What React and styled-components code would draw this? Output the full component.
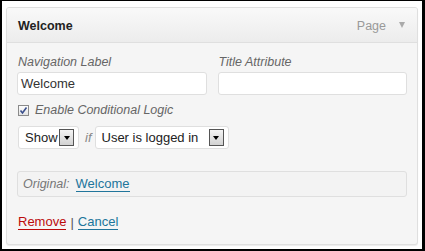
import React from 'react'
import styled, { createGlobalStyle } from 'styled-components'

const GlobalStyle = createGlobalStyle`
  html, body {
    margin: 0;
    padding: 0;
    background: #fff;
  }
  body {
    font-family: "Liberation Sans", Arial, sans-serif;
    font-size: 13px;
    color: #333;
  }
`

const Frame = styled.div`
  box-sizing: border-box;
  width: 425px;
  height: 251px;
  border: 2px solid #000;
  border-top-width: 1px;
  border-right-width: 3px;
  background: #fff;
  padding: 6px 0 0 4px;
`

const Panel = styled.div`
  box-sizing: border-box;
  width: 412px;
  height: 238px;
  border: 1px solid #dfdfdf;
  border-radius: 3px;
  background: #f5f5f5;
  box-shadow: 0 1px 1px rgba(0, 0, 0, 0.08);
  overflow: hidden;
`

const Header = styled.div`
  height: 34px;
  display: flex;
  align-items: center;
  padding: 0 12px 0 11px;
  border-bottom: 1px solid #dfdfdf;
  background: linear-gradient(to bottom, #f9f9f9, #ececec);
  font-size: 12.5px;
`

const Title = styled.span`
  flex: 1;
  font-weight: bold;
  color: #222;
  padding-top: 1px;
`

const Type = styled.span`
  color: #999;
  padding-top: 1px;
`

const Toggle = styled.span`
  margin-left: 13px;
  width: 0;
  height: 0;
  border-left: 3.5px solid transparent;
  border-right: 3.5px solid transparent;
  border-top: 6px solid #aaa;
`

const Body = styled.div`
  padding: 11px 10px 0 10px;
`

const Row = styled.div`
  display: flex;
  gap: 11px;
`

const Field = styled.div`
  display: flex;
  flex-direction: column;
  width: 190px;
`

const Label = styled.label`
  font-style: italic;
  font-size: 12.5px;
  color: #666;
  line-height: 17px;
  padding-left: 1px;
`

const Input = styled.div`
  box-sizing: border-box;
  height: 23px;
  margin-top: 1px;
  border: 1px solid #dfdfdf;
  border-radius: 3px;
  background: #fff;
  padding: 0 3px;
  line-height: 21px;
  color: #333;
`

const CheckRow = styled.div`
  display: flex;
  align-items: center;
  gap: 6px;
  margin-top: 8px;
  padding-left: 1px;
  font-style: italic;
  font-size: 12.5px;
  color: #666;
`

const Box = styled.span`
  box-sizing: border-box;
  width: 11px;
  height: 11px;
  border: 1px solid #8a8a8a;
  background: linear-gradient(to bottom, #fdfdfd, #e4e4e4);
  display: flex;
  align-items: center;
  justify-content: center;
`

const LogicRow = styled.div`
  display: flex;
  align-items: center;
  margin-top: 9px;
  padding-left: 1px;
`

const Select = styled.div`
  box-sizing: border-box;
  width: ${p => p.$w}px;
  height: 23px;
  border: 1px solid #dfdfdf;
  border-radius: 3px;
  background: #fff;
  display: flex;
  align-items: center;
  justify-content: space-between;
  padding: 0 4px 0 6px;
  color: #222;
`

const Arrow = styled.span`
  box-sizing: border-box;
  width: 15px;
  height: 17px;
  border: 1px solid #555;
  background: linear-gradient(to bottom, #f4f4f4, #d2d2d2);
  display: flex;
  align-items: center;
  justify-content: center;
  &::after {
    content: "";
    width: 0;
    height: 0;
    border-left: 3.5px solid transparent;
    border-right: 3.5px solid transparent;
    border-top: 4px solid #000;
  }
`

const If = styled.span`
  font-style: italic;
  color: #888;
  margin: 0 3px 0 6px;
`

const Original = styled.div`
  box-sizing: border-box;
  height: 26px;
  margin-top: 22px;
  width: 390px;
  border: 1px solid #dfdfdf;
  border-radius: 3px;
  background: #f3f3f3;
  display: flex;
  align-items: center;
  padding: 0 5px;
  color: #777;
  font-style: italic;
  font-size: 12.5px;
`

const Link = styled.a`
  color: ${p => p.$red ? '#bc0b0b' : '#21759b'};
  font-style: normal;
  font-size: 13px;
  text-decoration: none;
  border-bottom: 1px solid ${p => p.$red ? '#bc0b0b' : '#21759b'};
  line-height: 14px;
`

const Actions = styled.div`
  margin-top: 18px;
  padding-left: 1px;
  display: flex;
  align-items: flex-end;
  color: #555;
`

const Sep = styled.span`
  margin: 0 4px;
`

export default function App() {
  return (
    <>
      <GlobalStyle />
      <Frame>
        <Panel>
          <Header>
            <Title>Welcome</Title>
            <Type>Page</Type>
            <Toggle />
          </Header>
          <Body>
            <Row>
              <Field>
                <Label>Navigation Label</Label>
                <Input>Welcome</Input>
              </Field>
              <Field>
                <Label>Title Attribute</Label>
                <Input />
              </Field>
            </Row>
            <CheckRow>
              <Box>
                <svg width="9" height="9" viewBox="0 0 9 9">
                  <path d="M1.5 4.5 L3.5 7 L7.5 1.5" fill="none" stroke="#3a4f8c" strokeWidth="1.6" />
                </svg>
              </Box>
              Enable Conditional Logic
            </CheckRow>
            <LogicRow>
              <Select $w={61}>
                Show
                <Arrow />
              </Select>
              <If>if</If>
              <Select $w={134}>
                User is logged in
                <Arrow />
              </Select>
            </LogicRow>
            <Original>
              Original:
              <Link href="#" style={{ marginLeft: 6 }}>Welcome</Link>
            </Original>
            <Actions>
              <Link href="#" $red>Remove</Link>
              <Sep>|</Sep>
              <Link href="#">Cancel</Link>
            </Actions>
          </Body>
        </Panel>
      </Frame>
    </>
  )
}
